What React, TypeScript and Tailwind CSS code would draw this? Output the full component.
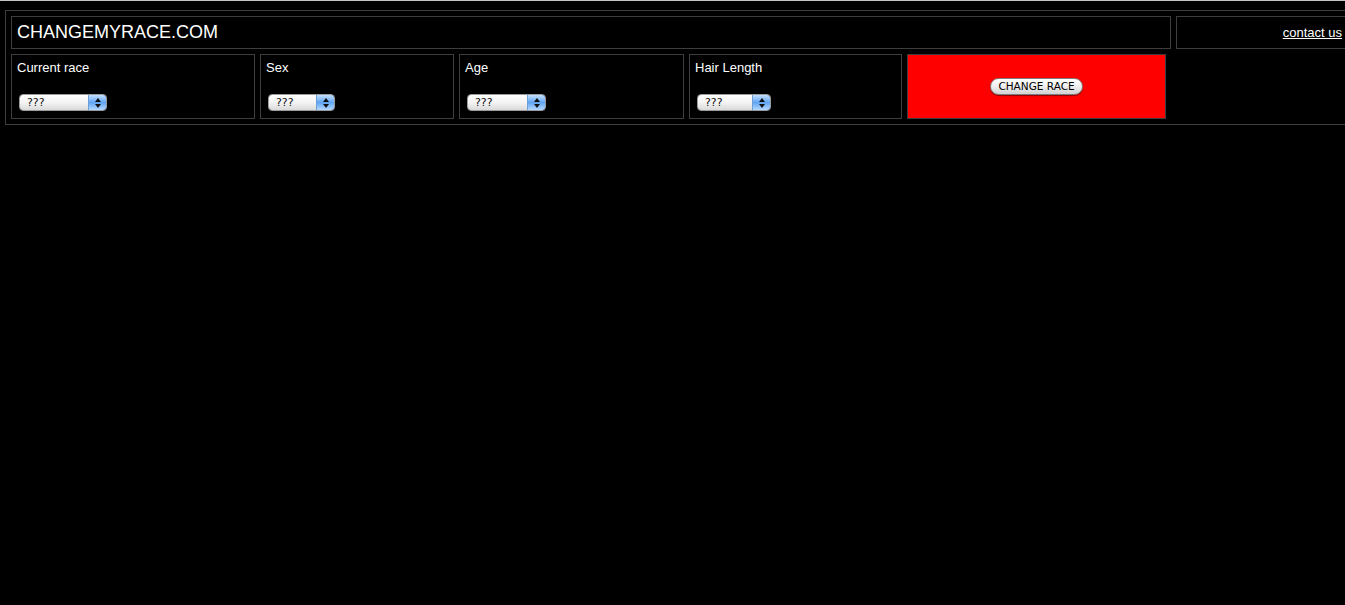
import React from "react";

function MacSelect({ className }: { className: string }) {
  return (
    <div
      className={`flex h-[17px] items-stretch overflow-hidden rounded-[4px] border border-[#9a9a9a] shadow-[0_1px_1px_rgba(0,0,0,0.5)] ${className}`}
    >
      <div className="flex flex-1 items-center bg-gradient-to-b from-white via-[#f4f4f4] to-[#d9d9d9] pl-[7px] text-[11px] leading-none text-[#111] [font-family:'DejaVu_Sans',sans-serif]">
        ???
      </div>
      <div className="flex w-[18px] flex-col items-center justify-center gap-[2px] border-l border-[#6c9fd8] bg-gradient-to-b from-[#c3e0ff] via-[#5fa5f3] to-[#b4d8ff]">
        <svg width="6" height="4" viewBox="0 0 6 4">
          <polygon points="3,0 6,4 0,4" fill="#111" />
        </svg>
        <svg width="6" height="4" viewBox="0 0 6 4">
          <polygon points="0,0 6,0 3,4" fill="#111" />
        </svg>
      </div>
    </div>
  );
}

function FieldCell({
  label,
  cellClass,
  selectClass,
}: {
  label: string;
  cellClass: string;
  selectClass: string;
}) {
  return (
    <div
      className={`flex h-[65px] flex-col border border-[#3d3d3d] px-[5px] pt-[5px] ${cellClass}`}
    >
      <div className="text-[13px] leading-[15px] text-white">{label}</div>
      <div className="ml-[2px] mt-[19px]">
        <MacSelect className={selectClass} />
      </div>
    </div>
  );
}

export default function App() {
  return (
    <div className="min-h-screen w-full overflow-hidden bg-black [font-family:'Liberation_Sans',Arial,sans-serif]">
      <div className="h-px w-full bg-[#c4c4c4]" />
      <div className="ml-[5px] mt-[9px] flex w-[1350px] flex-col gap-[5px] border border-[#3d3d3d] p-[5px]">
        <div className="flex gap-[5px]">
          <div className="flex h-[33px] w-[1160px] items-center border border-[#3d3d3d] px-[5px] text-[18px] text-white">
            CHANGEMYRACE.COM
          </div>
          <div className="flex h-[33px] flex-1 items-center justify-end border border-[#3d3d3d] px-[6px]">
            <a href="#" className="text-[13px] text-white underline">
              contact us
            </a>
          </div>
        </div>
        <div className="flex gap-[5px]">
          <FieldCell label="Current race" cellClass="w-[244px]" selectClass="w-[88px]" />
          <FieldCell label="Sex" cellClass="w-[194px]" selectClass="w-[67px]" />
          <FieldCell label="Age" cellClass="w-[225px]" selectClass="w-[79px]" />
          <FieldCell label="Hair Length" cellClass="w-[213px]" selectClass="w-[74px]" />
          <div className="flex h-[65px] w-[259px] items-center justify-center border border-[#3d3d3d] bg-[#ff0000]">
            <button className="flex h-[17px] w-[93px] items-center justify-center rounded-full border border-[#7d7d7d] bg-gradient-to-b from-white via-[#eeeeee] to-[#d2d2d2] text-[10.5px] leading-none text-black shadow-[0_1px_1px_rgba(0,0,0,0.45)] [font-family:'DejaVu_Sans',sans-serif]">
              CHANGE RACE
            </button>
          </div>
        </div>
      </div>
    </div>
  );
}
